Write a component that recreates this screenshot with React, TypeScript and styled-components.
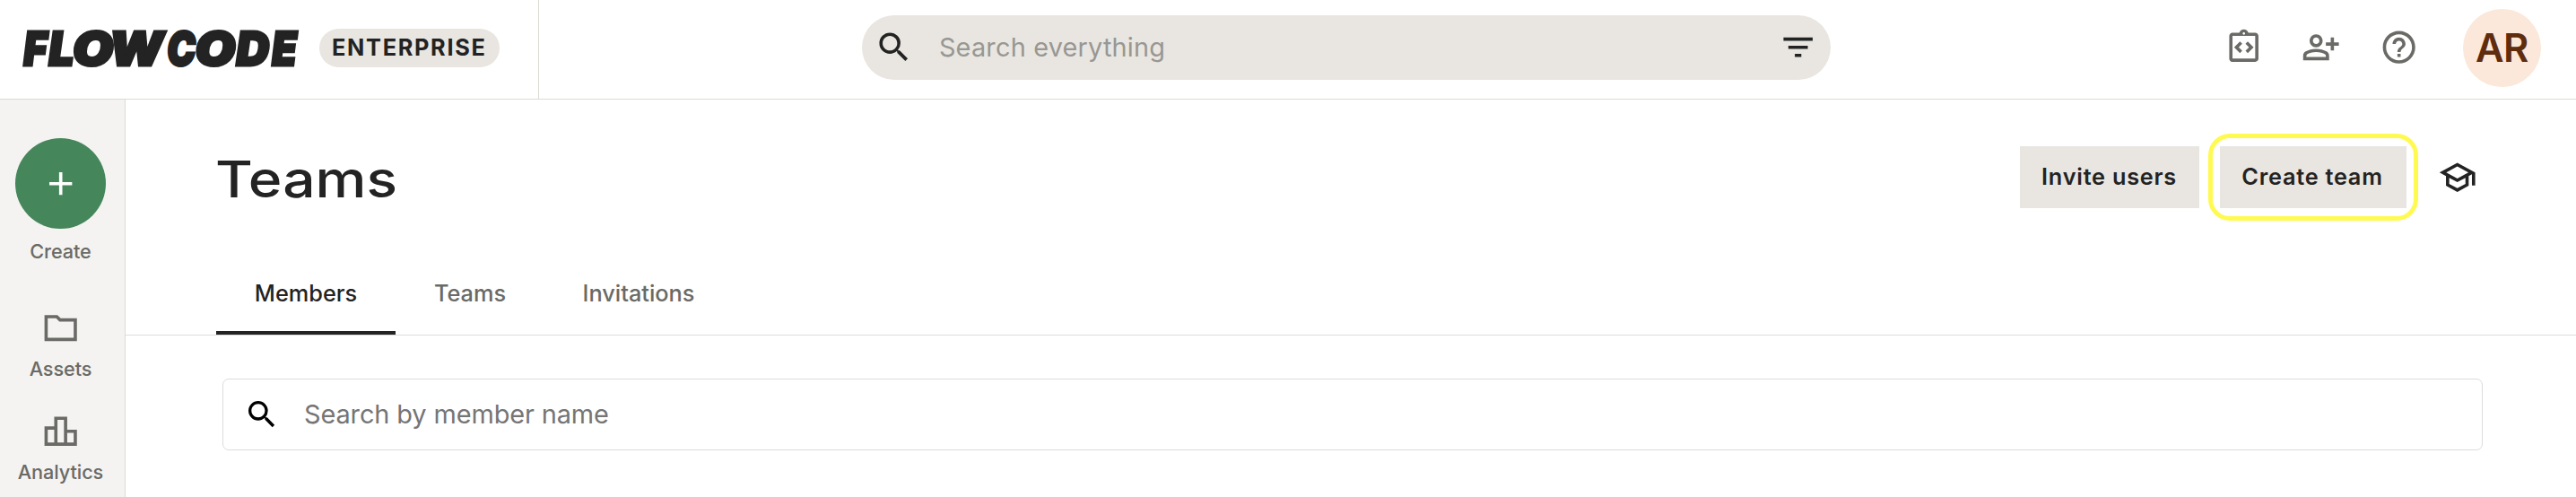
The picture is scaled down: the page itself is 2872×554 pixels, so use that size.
import React from "react";
import styled, { createGlobalStyle } from "styled-components";
import {
  MdFilterList,
  MdHelpOutline,
  MdOutlineIntegrationInstructions,
  MdOutlinePersonAddAlt,
  MdOutlineSchool,
  MdSearch,
} from "react-icons/md";

const color = {
  ink: "#232323",
  muted: "#6a6a66",
  sand: "#e9e6e1",
  line: "#dbdad5",
  softLine: "#dcdcdc",
};

const GlobalStyle = createGlobalStyle`
  * { box-sizing: border-box; }
  body {
    margin: 0;
    background: #fff;
    color: ${color.ink};
    font-family: Inter, "Liberation Sans", sans-serif;
  }
  svg { display: block; flex: none; }
`;

const Page = styled.div`
  display: flex;
  flex-direction: column;
  width: 2872px;
  height: 554px;
  overflow: hidden;
`;

const Header = styled.header`
  display: flex;
  align-items: center;
  flex: none;
  height: 111px;
  border-bottom: 1px solid ${color.line};
`;

const Brand = styled.div`
  display: flex;
  align-items: center;
  width: 601px;
  height: 110px;
  padding: 0 0 3px 20px;
  border-right: 1px solid ${color.line};
`;

const Wordmark = styled.svg`
  overflow: visible;
  font-family: Inter, sans-serif;
  font-size: 52.3px;
  font-weight: 900;
  font-style: italic;
  fill: ${color.ink};
  stroke: ${color.ink};
  stroke-width: 3px;
  stroke-linejoin: miter;
`;

const PlanBadge = styled.span`
  display: flex;
  align-items: center;
  width: 201px;
  height: 43px;
  margin-left: 16px;
  padding: 0 0 2px 14px;
  border-radius: 22px;
  background: ${color.sand};
  font-size: 25.3px;
  font-weight: 700;
  letter-spacing: 1.7px;
  line-height: 41px;
  white-space: nowrap;
`;

const GlobalSearch = styled.div`
  display: flex;
  align-items: center;
  width: 1080px;
  height: 72px;
  margin: 0 0 4px 360px;
  padding: 0 15px 0 13.5px;
  border-radius: 36px;
  background: ${color.sand};
`;

const Placeholder = styled.span<{ $tone: string; $gap: number; $track: number }>`
  flex: 1;
  margin-left: ${(p) => p.$gap}px;
  padding-bottom: 1px;
  color: ${(p) => p.$tone};
  font-size: 28.9px;
  letter-spacing: ${(p) => p.$track}px;
  line-height: 40px;
  white-space: nowrap;
`;

const HeaderActions = styled.div`
  display: flex;
  align-items: center;
  margin: 0 39px 4px auto;
  color: ${color.muted};
`;

const HeaderIcon = styled.span`
  display: flex;
  margin: 0 43.4px 1px 0;
`;

const Avatar = styled.span`
  display: flex;
  align-items: center;
  justify-content: center;
  width: 87px;
  height: 87px;
  margin-left: 6px;
  padding-bottom: 1px;
  border-radius: 50%;
  background: #fbe8da;
  color: #602c0e;
  font-size: 43.4px;
  font-weight: 600;
  letter-spacing: -0.4px;
`;

const Body = styled.div`
  display: flex;
  flex: 1;
  min-height: 0;
`;

const Sidebar = styled.nav`
  display: flex;
  flex-direction: column;
  align-items: center;
  width: 140px;
  padding: 43px 4px 0 0;
  border-right: 1px solid ${color.line};
  background: #f4f3f1;
  color: ${color.muted};
`;

const CreateButton = styled.span`
  display: flex;
  align-items: center;
  justify-content: center;
  width: 101px;
  height: 101px;
  border-radius: 50%;
  background: #45865b;
  color: #fff;
`;

const NavItem = styled.div<{ $top: number; $gap: number }>`
  display: flex;
  flex-direction: column;
  align-items: center;
  gap: ${(p) => p.$gap}px;
  margin-top: ${(p) => p.$top}px;
`;

const NavLabel = styled.span`
  font-size: 21.7px;
  font-weight: 500;
  letter-spacing: -0.1px;
  line-height: 28px;
`;

const Main = styled.main`
  display: flex;
  flex: 1;
  flex-direction: column;
`;

const TitleRow = styled.div`
  display: flex;
  align-items: flex-start;
  height: 180px;
  padding: 38px 110.4px 0 100px;
`;

const Title = styled.h1`
  margin: 16px auto 0 0;
  font-size: 56px;
  font-weight: 500;
  line-height: 70px;
  transform: scaleX(1.145);
  transform-origin: left center;
`;

const Button = styled.span<{ $width: number }>`
  display: flex;
  align-items: center;
  justify-content: center;
  width: ${(p) => p.$width}px;
  height: 69px;
  padding: 0 1px 2px 0;
  background: ${color.sand};
  font-size: 25.3px;
  font-weight: 600;
  letter-spacing: 0.75px;
  white-space: nowrap;
`;

const InviteSlot = styled.div`
  margin-top: 14px;
`;

const Highlight = styled.div`
  display: flex;
  align-items: center;
  justify-content: center;
  width: 234px;
  height: 97px;
  margin-left: 9.5px;
  border: 5.5px solid #fffa52;
  border-radius: 24px;
`;

const LearnIcon = styled.span`
  margin: 27px 0 0 22.7px;
`;

const Tabs = styled.div`
  display: flex;
  height: 83px;
  padding-left: 101px;
  border-bottom: 1px solid ${color.softLine};
`;

const Tab = styled.span<{ $width: number; $active?: boolean }>`
  width: ${(p) => p.$width}px;
  height: 82px;
  padding-top: 21px;
  border-bottom: 4px solid ${(p) => (p.$active ? color.ink : "transparent")};
  color: ${(p) => (p.$active ? color.ink : color.muted)};
  font-size: 25.3px;
  font-weight: 500;
  line-height: 30px;
  text-align: center;
`;

const MemberSearch = styled.div`
  display: flex;
  align-items: center;
  height: 80px;
  margin: 48px 104px 0 108px;
  padding: 0 23px;
  border: 1px solid ${color.softLine};
  border-radius: 7px;
`;

const glyphs = [
  { ch: "F", x: 6.5, sx: 0.857 },
  { ch: "L", x: 34.5, sx: 0.956 },
  { ch: "O", x: 61.2, sx: 1.118 },
  { ch: "W", x: 102, sx: 1.07 },
  { ch: "C", x: 166.5, sx: 0.81 },
  { ch: "O", x: 197.7, sx: 1.11 },
  { ch: "D", x: 243.5, sx: 0.977 },
  { ch: "E", x: 283.2, sx: 0.862 },
];

const iconSize = 43.4;

const Drawn = ({ d }: { d: string }) => (
  <svg width={iconSize} height={iconSize} viewBox="0 0 24 24" fill="currentColor">
    <path d={d} />
  </svg>
);

export default function App() {
  return (
    <Page>
      <GlobalStyle />
      <Header>
        <Brand>
          <Wordmark width="320" height="80">
            {glyphs.map((g, i) => (
              <text key={i} transform={`translate(${g.x} 59) skewX(1) scale(${g.sx} 1)`}>
                {g.ch}
              </text>
            ))}
          </Wordmark>
          <PlanBadge>ENTERPRISE</PlanBadge>
        </Brand>
        <GlobalSearch>
          <MdSearch size={iconSize} color={color.ink} />
          <Placeholder $tone="#989793" $gap={29} $track={0.19}>
            Search everything
          </Placeholder>
          <MdFilterList size={iconSize} color={color.ink} />
        </GlobalSearch>
        <HeaderActions>
          <HeaderIcon>
            <MdOutlineIntegrationInstructions size={iconSize} />
          </HeaderIcon>
          <HeaderIcon>
            <MdOutlinePersonAddAlt size={iconSize} />
          </HeaderIcon>
          <HeaderIcon>
            <MdHelpOutline size={iconSize} />
          </HeaderIcon>
          <Avatar>AR</Avatar>
        </HeaderActions>
      </Header>
      <Body>
        <Sidebar>
          <CreateButton>
            <Drawn d="M19 13h-6v6h-2v-6H5v-2h6V5h2v6h6v2z" />
          </CreateButton>
          <NavItem $top={11} $gap={0}>
            <NavLabel>Create</NavLabel>
          </NavItem>
          <NavItem $top={49.5} $gap={10}>
            <Drawn d="M9.17 6l2 2H20v10H4V6h5.17M10 4H2v16h20V6H12l-2-2z" />
            <NavLabel>Assets</NavLabel>
          </NavItem>
          <NavItem $top={34} $gap={9.5}>
            <Drawn d="M16 11V3H8v6H2v12h20V11h-6zm-6-6h4v14h-4V5zm-6 6h4v8H4v-8zm16 8h-4v-6h4v6z" />
            <NavLabel>Analytics</NavLabel>
          </NavItem>
        </Sidebar>
        <Main>
          <TitleRow>
            <Title>Teams</Title>
            <InviteSlot>
              <Button $width={200}>Invite users</Button>
            </InviteSlot>
            <Highlight>
              <Button $width={208}>Create team</Button>
            </Highlight>
            <LearnIcon>
              <MdOutlineSchool size={iconSize} />
            </LearnIcon>
          </TitleRow>
          <Tabs>
            <Tab $width={200} $active>
              Members
            </Tab>
            <Tab $width={166}>Teams</Tab>
            <Tab $width={210}>Invitations</Tab>
          </Tabs>
          <MemberSearch>
            <MdSearch size={40} color="#000" />
            <Placeholder $tone="#757575" $gap={27} $track={-0.1}>
              Search by member name
            </Placeholder>
          </MemberSearch>
        </Main>
      </Body>
    </Page>
  );
}
